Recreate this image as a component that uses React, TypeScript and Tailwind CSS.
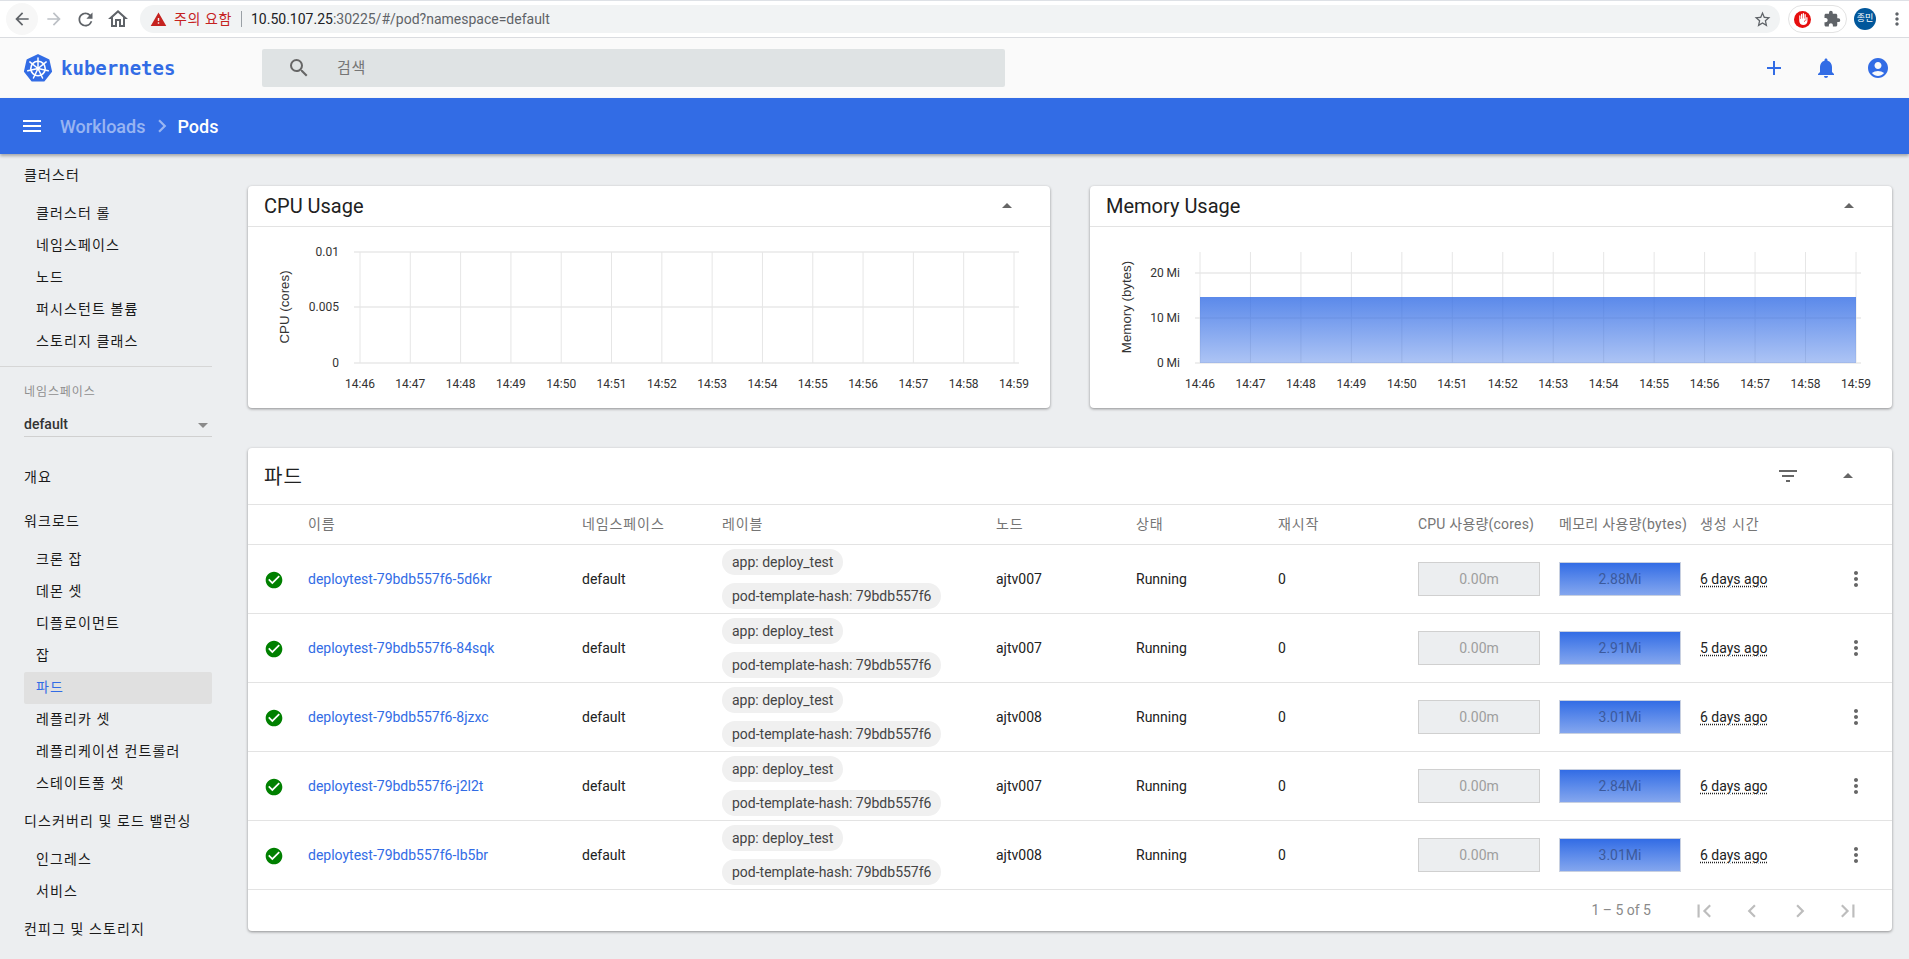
import {
  MdAccountCircle,
  MdAdd,
  MdArrowBack,
  MdArrowDropDown,
  MdArrowDropUp,
  MdArrowForward,
  MdCheckCircle,
  MdChevronLeft,
  MdChevronRight,
  MdExtension,
  MdFilterList,
  MdFirstPage,
  MdFrontHand,
  MdLastPage,
  MdMenu,
  MdMoreVert,
  MdNotifications,
  MdOutlineHome,
  MdRefresh,
  MdSearch,
  MdStarBorder,
  MdWarning,
} from 'react-icons/md';

const times = ['14:46', '14:47', '14:48', '14:49', '14:50', '14:51', '14:52', '14:53', '14:54', '14:55', '14:56', '14:57', '14:58', '14:59'];

const pods = [
  { name: 'deploytest-79bdb557f6-5d6kr', node: 'ajtv007', mem: '2.88Mi', age: '6 days ago' },
  { name: 'deploytest-79bdb557f6-84sqk', node: 'ajtv007', mem: '2.91Mi', age: '5 days ago' },
  { name: 'deploytest-79bdb557f6-8jzxc', node: 'ajtv008', mem: '3.01Mi', age: '6 days ago' },
  { name: 'deploytest-79bdb557f6-j2l2t', node: 'ajtv007', mem: '2.84Mi', age: '6 days ago' },
  { name: 'deploytest-79bdb557f6-lb5br', node: 'ajtv008', mem: '3.01Mi', age: '6 days ago' },
];

const columns = 'grid grid-cols-[60px_274px_140px_274px_140px_142px_140px_141px_141px_130px_52px] items-center';

function KubeLogo() {
  const hept = Array.from({ length: 7 }, (_, i) => {
    const a = (-90 + (i * 360) / 7) * (Math.PI / 180);
    return `${15 + 15 * Math.cos(a)},${15.5 + 15 * Math.sin(a)}`;
  }).join(' ');
  const spokes = Array.from({ length: 7 }, (_, i) => {
    const a = (-90 + (i * 360) / 7) * (Math.PI / 180);
    return { x: 15 + 10.5 * Math.cos(a), y: 15.5 + 10.5 * Math.sin(a) };
  });
  return (
    <svg width="30" height="31" viewBox="0 0 30 31">
      <polygon points={hept} fill="#326ce5" stroke="#326ce5" strokeWidth="2" strokeLinejoin="round" transform="translate(1.5 1.5) scale(0.9)" />
      <circle cx="15" cy="15.5" r="7.2" fill="none" stroke="#fff" strokeWidth="1.6" />
      {spokes.map((s, i) => (
        <line key={i} x1="15" y1="15.5" x2={s.x} y2={s.y} stroke="#fff" strokeWidth="1.5" strokeLinecap="round" />
      ))}
      <circle cx="15" cy="15.5" r="1.8" fill="#fff" />
    </svg>
  );
}

function BrowserBar() {
  return (
    <div className="flex h-[38px] items-center border-t border-b border-t-[#dee1e6] border-b-[#dadce0] bg-white">
      <div className="flex w-[140px] items-center pl-[6px] text-[#5f6368]">
        <span className="flex h-8 w-8 items-center justify-center rounded-full bg-[#f7f7f7]">
          <MdArrowBack size={20} />
        </span>
        <MdArrowForward size={20} className="ml-[6px] text-[#bdc1c6]" />
        <MdRefresh size={21} className="ml-[11px]" />
        <MdOutlineHome size={24} className="ml-[10px]" />
      </div>
      <div className="flex h-[28px] w-[1640px] items-center rounded-full bg-[#f1f3f4] pl-[10px] pr-[8px]">
        <MdWarning size={17} className="text-[#c5221f]" />
        <span className="ml-[7px] text-[14px] tracking-[0.6px] text-[#c5221f]">주의 요함</span>
        <span className="mx-[9px] h-[16px] w-px bg-[#9aa0a6]" />
        <span className="text-[14px] text-[#202124]">10.50.107.25</span>
        <span className="text-[14px] text-[#5f6368]">:30225/#/pod?namespace=default</span>
        <MdStarBorder size={19} className="ml-auto text-[#5f6368]" />
      </div>
      <div className="ml-[8px] flex h-[28px] w-[59px] items-center justify-between rounded-full border border-[#e3e3e3] px-[5px]">
        <span className="flex h-[17px] w-[17px] items-center justify-center rounded-full bg-[#e60e0e] text-white">
          <MdFrontHand size={12} />
        </span>
        <MdExtension size={18} className="text-[#5f6368]" />
      </div>
      <span className="ml-[7px] flex h-[22px] w-[22px] items-center justify-center rounded-full bg-[#01579b] text-[9px] text-white">종민</span>
      <MdMoreVert size={20} className="ml-[11px] text-[#5f6368]" />
    </div>
  );
}

function TopBar() {
  return (
    <div className="flex h-[60px] items-center bg-[#fafafa] pr-[19px]">
      <div className="flex w-[262px] items-center pl-[23px]">
        <KubeLogo />
        <span className="ml-[8px] font-['DejaVu_Sans_Mono',monospace] text-[19px] font-bold leading-none text-[#326ce5]">kubernetes</span>
      </div>
      <div className="flex h-[38px] w-[743px] items-center rounded-[2px] bg-[#dfe3e4] pl-[25px]">
        <MdSearch size={24} className="text-[#666]" />
        <span className="ml-[26px] text-[15px] tracking-[0.6px] text-[#757575]">검색</span>
      </div>
      <div className="ml-auto flex items-center gap-[28px] text-[#326ce5]">
        <MdAdd size={24} />
        <MdNotifications size={24} />
        <MdAccountCircle size={24} />
      </div>
    </div>
  );
}

function ActionBar() {
  return (
    <div className="relative z-10 flex h-[56px] items-center bg-[#326ce5] pl-[20px] text-white shadow-[0_2px_3px_rgba(0,0,0,0.3)]">
      <MdMenu size={24} />
      <span className="ml-[16px] text-[18px] font-medium text-white/50">Workloads</span>
      <MdChevronRight size={26} className="ml-[4px] mr-[2px] text-white/50" />
      <span className="text-[18px] font-medium">Pods</span>
    </div>
  );
}

function SideHead({ label }: { label: string }) {
  return <div className="flex h-[44px] items-center pb-[2px] pl-[24px] text-[14px] tracking-[1.1px] text-[#1a1a1a]">{label}</div>;
}

function SideItem({ label, active }: { label: string; active?: boolean }) {
  return (
    <div className={`ml-[24px] flex h-[32px] w-[188px] items-center rounded-[2px] pb-[2px] pl-[12px] text-[14px] tracking-[1.1px] ${active ? 'bg-[#e0e0e0] text-[#326ce5]' : 'text-[#1a1a1a]'}`}>
      {label}
    </div>
  );
}

function Sidebar() {
  return (
    <aside className="w-[212px] shrink-0 overflow-hidden">
      <SideHead label="클러스터" />
      <SideItem label="클러스터 롤" />
      <SideItem label="네임스페이스" />
      <SideItem label="노드" />
      <SideItem label="퍼시스턴트 볼륨" />
      <SideItem label="스토리지 클래스" />
      <div className="mt-[8px] h-px bg-[#d6d6d6]" />
      <div className="h-[89px] pl-[24px] pt-[17px]">
        <div className="flex h-[16px] items-center text-[12px] tracking-[0.9px] text-[#8f8f8f]">네임스페이스</div>
        <div className="flex h-[37px] items-center justify-between border-b border-[#d0d0d0] pt-[13px] text-[14px] font-medium text-[#333]">
          default
          <MdArrowDropDown size={24} className="mr-[-3px] pr-[0px] text-[#8a8a8a]" />
        </div>
      </div>
      <SideHead label="개요" />
      <SideHead label="워크로드" />
      <SideItem label="크론 잡" />
      <SideItem label="데몬 셋" />
      <SideItem label="디플로이먼트" />
      <SideItem label="잡" />
      <SideItem label="파드" active />
      <SideItem label="레플리카 셋" />
      <SideItem label="레플리케이션 컨트롤러" />
      <SideItem label="스테이트풀 셋" />
      <SideHead label="디스커버리 및 로드 밸런싱" />
      <SideItem label="인그레스" />
      <SideItem label="서비스" />
      <SideHead label="컨피그 및 스토리지" />
    </aside>
  );
}

function Chart(props: {
  yTitle: string;
  titleX: number;
  left: number;
  right: number;
  lineLeft: number;
  lineRight: number;
  labelX: number;
  ticks: { y: number; label: string }[];
  area?: boolean;
}) {
  const { yTitle, titleX, left, right, lineLeft, lineRight, labelX, ticks, area } = props;
  const step = (right - left) / 13;
  return (
    <svg width="802" height="181" viewBox="0 0 802 181" className="block">
      <defs>
        <linearGradient id="memFill" x1="0" y1="0" x2="0" y2="1">
          <stop offset="0" stopColor="#326ce5" stopOpacity="0.8" />
          <stop offset="1" stopColor="#326ce5" stopOpacity="0.4" />
        </linearGradient>
      </defs>
      {ticks.map((t) => (
        <g key={t.label}>
          <line x1={lineLeft} x2={lineRight} y1={t.y} y2={t.y} stroke="#e8e8e8" strokeWidth="1.4" />
          <text x={labelX} y={t.y + 4} textAnchor="end" fontSize="12" fill="#333">{t.label}</text>
        </g>
      ))}
      {times.map((t, i) => (
        <g key={t}>
          <line x1={left + step * i} x2={left + step * i} y1="25" y2="136" stroke="#e6e6e6" />
          <text x={left + step * i} y="161" textAnchor="middle" fontSize="12" fill="#333">{t}</text>
        </g>
      ))}
      {area && <rect x={left} y="70" width={right - left} height="66" fill="url(#memFill)" />}
      <text
        transform={`translate(${titleX} 80) rotate(-90)`}
        textAnchor="middle"
        fontSize="13.3"
        fill="#333"
        fontFamily="'Liberation Sans', sans-serif"
      >
        {yTitle}
      </text>
    </svg>
  );
}

function ChartCard({ title, children }: { title: string; children: React.ReactNode }) {
  return (
    <section className="h-[222px] w-[802px] rounded-[4px] bg-white shadow-[0_1px_3px_rgba(0,0,0,0.4)]">
      <div className="flex h-[41px] items-center justify-between border-b border-[#e3e3e3] pl-[16px] pr-[31px]">
        <h2 className="text-[20px] text-[#212121]">{title}</h2>
        <MdArrowDropUp size={24} className="text-[#666]" />
      </div>
      {children}
    </section>
  );
}

function Chip({ text }: { text: string }) {
  return <span className="flex h-[26px] items-center rounded-full bg-[#f0f0f0] px-[10px] text-[14px] text-[#444]">{text}</span>;
}

function PodTable() {
  return (
    <section className="mt-[40px] w-[1644px] rounded-[4px] bg-white shadow-[0_1px_3px_rgba(0,0,0,0.4)]">
      <div className="flex h-[57px] items-center border-b border-[#e3e3e3] pl-[16px] pr-[32px]">
        <h2 className="pt-[2px] text-[20px] tracking-[1.2px] text-[#212121]">파드</h2>
        <MdFilterList size={24} className="ml-auto text-[#666]" />
        <MdArrowDropUp size={24} className="ml-[36px] text-[#666]" />
      </div>
      <div className={`${columns} h-[40px] border-b border-[#e3e3e3] text-[14px] text-[#757575]`}>
        <span />
        <span className="tracking-[0.9px]">이름</span>
        <span className="tracking-[0.9px]">네임스페이스</span>
        <span className="tracking-[0.9px]">레이블</span>
        <span className="tracking-[0.9px]">노드</span>
        <span className="tracking-[0.9px]">상태</span>
        <span className="tracking-[0.9px]">재시작</span>
        <span className="whitespace-nowrap tracking-[0.2px]">CPU 사용량(cores)</span>
        <span className="whitespace-nowrap tracking-[0.3px]">메모리 사용량(bytes)</span>
        <span className="tracking-[0.9px]">생성 시간</span>
        <span />
      </div>
      {pods.map((p) => (
        <div key={p.name} className={`${columns} h-[69px] border-b border-[#e3e3e3] text-[14px] text-[#212121]`}>
          <span className="flex justify-start pl-[16px] pt-[1px]">
            <MdCheckCircle size={20} className="text-[#008000]" />
          </span>
          <span className="text-[#326ce5]">{p.name}</span>
          <span>default</span>
          <div className="flex flex-col items-start gap-[8px]">
            <Chip text="app: deploy_test" />
            <Chip text="pod-template-hash: 79bdb557f6" />
          </div>
          <span>{p.node}</span>
          <span>Running</span>
          <span>0</span>
          <span className="flex h-[34px] w-[122px] items-center justify-center border border-[#d0d0d0] bg-[#eceef0] text-[#9e9e9e]">0.00m</span>
          <span className="flex h-[34px] w-[122px] items-center justify-center border border-[#c8d0e0] bg-gradient-to-b from-[#326ce5] to-[#84a6ee] text-[#3c5a9c]">{p.mem}</span>
          <span className="underline decoration-dotted underline-offset-2">{p.age}</span>
          <span className="flex justify-start pl-[14px]">
            <MdMoreVert size={24} className="text-[#666]" />
          </span>
        </div>
      ))}
      <div className="flex h-[41px] items-center pr-[32px] text-[#bdbdbd]">
        <span className="ml-auto mr-[41px] text-[14px] text-[#8a8a8a]">1 – 5 of 5</span>
        <span className="flex gap-[24px]">
          <MdFirstPage size={26} className="-mx-[1px]" />
          <MdChevronLeft size={26} className="-mx-[1px]" />
          <MdChevronRight size={26} className="-mx-[1px]" />
          <MdLastPage size={26} className="-mx-[1px]" />
        </span>
      </div>
    </section>
  );
}

export default function App() {
  return (
    <div className="flex h-[959px] flex-col overflow-hidden bg-[#eceef0] font-['Roboto','Noto_Sans_CJK_KR',sans-serif]">
      <BrowserBar />
      <TopBar />
      <ActionBar />
      <div className="flex min-h-0 flex-1">
        <Sidebar />
        <main className="pl-[36px] pt-[32px]">
          <div className="flex gap-[40px]">
            <ChartCard title="CPU Usage">
              <Chart
                yTitle="CPU (cores)"
                titleX={41}
                left={112}
                right={766}
                lineLeft={106}
                lineRight={771}
                labelX={91}
                ticks={[
                  { y: 25, label: '0.01' },
                  { y: 80, label: '0.005' },
                  { y: 136, label: '0' },
                ]}
              />
            </ChartCard>
            <ChartCard title="Memory Usage">
              <Chart
                yTitle="Memory (bytes)"
                titleX={41}
                left={110}
                right={766}
                lineLeft={105}
                lineRight={771}
                labelX={90}
                area
                ticks={[
                  { y: 46, label: '20 Mi' },
                  { y: 91, label: '10 Mi' },
                  { y: 136, label: '0 Mi' },
                ]}
              />
            </ChartCard>
          </div>
          <PodTable />
        </main>
      </div>
    </div>
  );
}
